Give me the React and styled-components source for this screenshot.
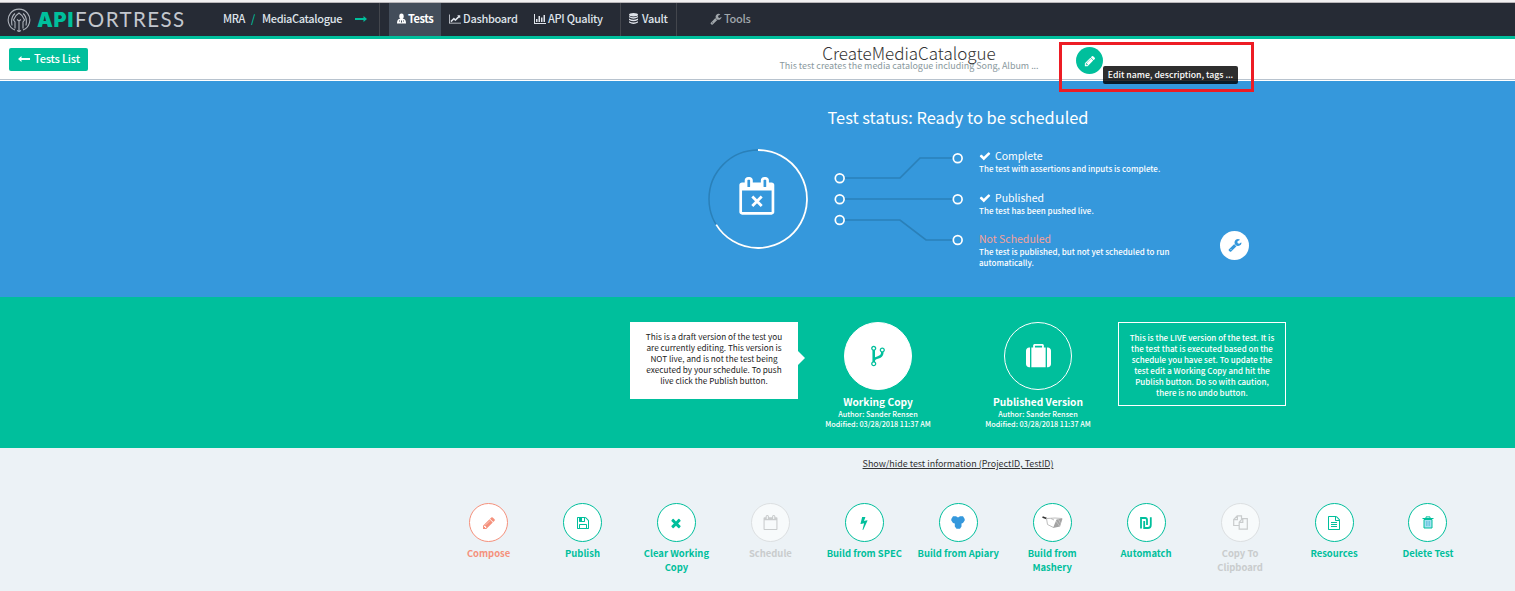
import React from "react";
import styled, { createGlobalStyle } from "styled-components";

const GREEN = "#00bf9c";
const BLUE = "#3598dc";
const SALMON = "#f5917c";

const Global = createGlobalStyle`
  * { box-sizing: border-box; }
  html, body { margin: 0; padding: 0; }
  body {
    background: #ecf2f6;
    font-family: "Noto Sans CJK SC", "Noto Sans", sans-serif;
    overflow: hidden;
  }
`;

const Page = styled.div`
  width: 1515px;
  height: 591px;
  overflow: hidden;
`;

/* ---------- icons ---------- */

const PATHS = {
  pencil: "M491 1536l91-91-235-235-91 91v107h128v128h107zm523-928q0-22-22-22-10 0-17 7l-542 542q-7 7-7 17 0 22 22 22 10 0 17-7l542-542q7-7 7-17zm-54-192l416 416-832 832h-416v-416zm683 96q0 53-37 90l-166 166-416-416 166-165q36-38 90-38 53 0 91 38l235 234q37 39 37 91z",
  check: "M1671 566q0 40-28 68l-724 724-136 136q-28 28-68 28t-68-28l-136-136-362-362q-28-28-28-68t28-68l136-136q28-28 68-28t68 28l294 295 656-657q28-28 68-28t68 28l136 136q28 28 28 68z",
  times: "M1490 1322q0 40-28 68l-136 136q-28 28-68 28t-68-28l-294-294-294 294q-28 28-68 28t-68-28l-136-136q-28-28-28-68t28-68l294-294-294-294q-28-28-28-68t28-68l136-136q28-28 68-28t68 28l294 294 294-294q28-28 68-28t68 28l136 136q28 28 28 68t-28 68l-294 294 294 294q28 28 28 68z",
  wrench: "M448 1472q0-26-19-45t-45-19-45 19-19 45 19 45 45 19 45-19 19-45zm644-420l-682 682q-37 37-90 37-52 0-91-37l-106-108q-38-36-38-90 0-53 38-91l681-681q39 98 114.5 173.5t173.5 114.5zm634-435q0 39-23 106-47 134-164.5 217.5t-258.5 83.5q-185 0-316.5-131.5t-131.5-316.5 131.5-316.5 316.5-131.5q58 0 121.5 16.5t107.5 46.5q16 11 16 28t-16 28l-293 169v224l193 107q5-3 79-48.5t135.5-81 70.5-35.5q15 0 23.5 10t8.5 25z",
  save: "M512 1536h768v-384h-768v384zm896 0h128v-896q0-14-10-38.5t-20-34.5l-281-281q-10-10-34-20t-39-10v416q0 40-28 68t-68 28h-576q-40 0-68-28t-28-68v-416h-128v1280h128v-416q0-40 28-68t68-28h832q40 0 68 28t28 68v416zm-384-928v-320q0-13-9.5-22.5t-22.5-9.5h-192q-13 0-22.5 9.500t-9.500 22.500v320q0 13 9.500 22.500t22.500 9.500h192q13 0 22.500-9.500t9.500-22.500zm640 32v928q0 40-28 68t-68 28h-1344q-40 0-68-28t-28-68v-1344q0-40 28-68t68-28h928q40 0 88 20t76 48l280 280q28 28 48 76t20 88z",
  file: "M1596 380q28 28 48 76t20 88v1152q0 40-28 68t-68 28h-1344q-40 0-68-28t-28-68v-1600q0-40 28-68t68-28h896q40 0 88 20t76 48zm-444-244v376h376q-10-29-22-41l-313-313q-12-12-41-22zm384 1528v-1024h-416q-40 0-68-28t-28-68v-416h-768v1536h1280zm-1024-864q0-14 9-23t23-9h704q14 0 23 9t9 23v64q0 14-9 23t-23 9h-704q-14 0-23-9t-9-23v-64zm736 224q14 0 23 9t9 23v64q0 14-9 23t-23 9h-704q-14 0-23-9t-9-23v-64q0-14 9-23t23-9h704zm0 256q14 0 23 9t9 23v64q0 14-9 23t-23 9h-704q-14 0-23-9t-9-23v-64q0-14 9-23t23-9h704z",
  suitcase: "M640 256h512v-128h-512v128zm-352 0v1408h-64q-92 0-158-66t-66-158v-960q0-92 66-158t158-66h64zm1120 0v1408h-1024v-1408h128v-160q0-40 28-68t68-28h576q40 0 68 28t28 68v160h128zm384 224v960q0 92-66 158t-158 66h-64v-1408h64q92 0 158 66t66 158z",
  fork: "M672 1472q0-40-28-68t-68-28-68 28-28 68 28 68 68 28 68-28 28-68zm0-1152q0-40-28-68t-68-28-68 28-28 68 28 68 68 28 68-28 28-68zm640 128q0-40-28-68t-68-28-68 28-28 68 28 68 68 28 68-28 28-68zm96 0q0 52-26 96.5t-70 69.5q-2 287-226 414-67 38-203 81-128 40-169.5 71t-41.5 100v26q44 25 70 69.5t26 96.5q0 80-56 136t-136 56-136-56-56-136q0-52 26-96.5t70-69.5v-820q-44-25-70-69.5t-26-96.5q0-80 56-136t136-56 136 56 56 136q0 52-26 96.5t-70 69.5v497q54-26 154-57 55-17 87.5-29.5t70.5-31 59-39.5 40.5-51 28-69.5 8.5-91.5q-44-25-70-69.5t-26-96.5q0-80 56-136t136-56 136 56 56 136z",
  calendar: "M192 1664h1408v-1024h-1408v1024zm384-1216v-288q0-14-9-23t-23-9h-64q-14 0-23 9t-9 23v288q0 14 9 23t23 9h64q14 0 23-9t9-23zm768 0v-288q0-14-9-23t-23-9h-64q-14 0-23 9t-9 23v288q0 14 9 23t23 9h64q14 0 23-9t9-23zm384-64v1280q0 52-38 90t-90 38h-1408q-52 0-90-38t-38-90v-1280q0-52 38-90t90-38h128v-96q0-66 47-113t113-47h64q66 0 113 47t47 113v96h384v-96q0-66 47-113t113-47h64q66 0 113 47t47 113v96h128q52 0 90 38t38 90z",
  bolt: "M1333 566q18 20 7 44l-540 1157q-13 25-42 25-4 0-14-2-17-5-25.5-19t-4.5-30l197-808-406 101q-4 1-12 1-18 0-31-11-18-15-13-39l201-825q4-14 16-23t28-9h328q19 0 32 12.5t13 29.5q0 8-5 18l-171 463 396-98q8-2 12-2 19 0 34 15z",
  chart: "M1920 1536v128h-2048v-1536h128v1408h1920zm-128-1248v435q0 21-19.5 29.5t-35.5-7.5l-121-121-633 633q-10 10-23 10t-23-10l-233-233-416 416-192-192 585-585q10-10 23-10t23 10l233 233 464-464-121-121q-16-16-7.5-35.5t29.5-19.5h435q14 0 23 9t9 23z",
};

const Svg = styled.svg`
  display: block;
  flex: none;
`;

const Glyph = ({ name, size, box = "0 0 1792 1792", w }) => (
  <Svg width={w || size} height={size} viewBox={box} fill="currentColor">
    <path d={PATHS[name]} />
  </Svg>
);

const Knight = () => (
  <Svg width="24" height="24" viewBox="0 0 24 24" fill="none" stroke="#aeb3bb" strokeWidth="1.1">
    <path d="M8 22A10.800 10.800 0 1 1 16 22" />
    <path d="M8 20.500V14L6.500 12 9 7.500 12 5l3 2.500 2.500 4.500L16 14v6.500" />
    <path d="M5 17.500Q3.500 9 8 5.500M19 17.500Q20.500 9 16 5.500M10 11.500L12 13l2-1.500M12 13v10M10 22.500l2 1 2-1" />
  </Svg>
);

const Astronaut = () => (
  <Svg width="9" height="11" viewBox="0 0 9 11" fill="currentColor">
    <path d="M4.500 0.500a2.200 2.200 0 0 1 2.200 2.200v1.300a2.200 2.200 0 0 1-4.400 0V2.700A2.200 2.200 0 0 1 4.500 .5z" />
    <path fillRule="evenodd" d="M2 6h5q2 .6 2 4.500H0Q0 6.600 2 6zM2 7.500v1h1v-1zM4 7.500v2h1v-2zM6 7.500v1h1v-1z" />
  </Svg>
);

const Bars = () => (
  <Svg width="12" height="10" viewBox="0 0 12 10" fill="currentColor">
    <path d="M0 0h1v9h11v1H0zM2 5h1.500v3H2zM4.500 2H6v6H4.500zM7 3.500h1.500V8H7zM9.500 1H11v7H9.500z" />
  </Svg>
);

const Database = () => (
  <Svg width="9" height="11" viewBox="0 0 9 11" fill="currentColor">
    <ellipse cx="4.500" cy="1.700" rx="4.500" ry="1.700" />
    <path d="M0 3q4.500 2.400 9 0v1.300q-4.500 2.800-9 0zM0 5.600q4.500 2.400 9 0v1.300q-4.500 2.800-9 0zM0 8.200q4.500 2.400 9 0v1.300q-4.500 2.800-9 0z" />
  </Svg>
);

const LongArrow = ({ left }) => (
  <Svg width="12" height="8" viewBox="0 0 12 8" fill="currentColor" transform={left ? "scale(-1 1)" : undefined}>
    <path d="M0 3.100h8.500V1l3.500 3-3.500 3V4.900H0z" />
  </Svg>
);

const Apiary = () => (
  <Svg width="14" height="13" viewBox="0 0 14 13" fill={BLUE}>
    <path d="M2 .3h3L7 1.500 9 .3h3L13.700 3v1.500L12 7l-1.500.5v3L9 12.800H5.500L3.800 10.500v-3L2 7 .3 4.500V3z" />
  </Svg>
);

const Masher = () => (
  <Svg width="21" height="13" viewBox="0 0 21 13" fill="none">
    <path d="M.5 1l4 1.600" stroke="#333" strokeWidth="1.600" />
    <path d="M4.500 2.500L13 2l7 .500M4.500 2.500L5.500 8.500l6 3M9 2.500L12 4" stroke="#b5b5b5" strokeWidth=".9" />
    <path d="M14.500 3.500L20.500 2.500l-2.500 8-7 1.500z" fill="#a3a3a3" />
    <path d="M14 5l4 5.500M16.500 3.500l2 4" stroke="#dedede" strokeWidth=".5" />
  </Svg>
);

const Shekel = () => (
  <Svg width="12" height="12" viewBox="0 0 12 12" fill="none" stroke="currentColor" strokeWidth="1.800">
    <path d="M1 11.500V1h4.200Q7 1 7 3v5M4.200 4v7h3.600Q10.800 11 10.800 8V.3" />
  </Svg>
);

const Copies = () => (
  <Svg width="15" height="15" viewBox="0 0 15 15" fill="none" stroke="currentColor" strokeWidth="1.200">
    <path d="M6 10.500H.7V4.500L4.200 .8H8.500V4M4.400 .8v3.900H.7M6.200 7.200L9.500 3.600h4.800v10.600H6.200zM9.800 3.800v3.500H6.300" />
  </Svg>
);

const Trash = () => (
  <Svg width="12" height="13" viewBox="0 0 12 13" fill="none" stroke="currentColor">
    <path d="M2 3.500h8v8.500H2z" fill="#a5e0f0" />
    <path d="M.5 2.500h11M4 2.500V.9h4v1.600" />
    <path d="M4.500 5v5M6 5v5M7.500 5v5" stroke="#4db5d8" strokeWidth=".6" />
  </Svg>
);

/* ---------- top bar ---------- */

const TopEdge = styled.div`
  height: 3px;
  background: #f1f0f1;
  border-bottom: 1px solid #b9b6b9;
`;

const NavBar = styled.header`
  display: flex;
  height: 36px;
  background: #262b35;
  border-bottom: 3px solid ${GREEN};
  color: #dfe3ea;
`;

const Brand = styled.div`
  display: flex;
  align-items: center;
  width: 223px;
  padding-left: 7px;
`;

const BrandName = styled.div`
  display: flex;
  align-items: baseline;
  margin-left: 6px;
  line-height: 24px;
`;

const BrandStrong = styled.span`
  font: 900 20px/24px Inter, sans-serif;
  color: ${GREEN};
  width: 38px;
  letter-spacing: 0.700px;
`;

const BrandLight = styled.span`
  font: 400 20.500px/24px Lato, sans-serif;
  color: #c3c7ce;
  letter-spacing: 1.400px;
`;

const Crumbs = styled.div`
  display: flex;
  align-items: center;
  width: 157px;
  padding-bottom: 2px;
  border-right: 1px solid #43464d;
  font-size: 11px;
  font-weight: 500;
  letter-spacing: -0.350px;
  white-space: pre;
  line-height: 31px;
  i { color: ${GREEN}; font-style: normal; margin: 0 7px 0 6px; }
  svg { color: ${GREEN}; margin-left: 13px; }
`;

const NavItem = styled.div`
  display: flex;
  align-items: center;
  width: ${(p) => p.$w}px;
  padding: 0 0 2px ${(p) => p.$pad}px;
  gap: ${(p) => p.$gap || 2}px;
  margin-left: ${(p) => p.$ml || 0}px;
  font-size: 11px;
  font-weight: ${(p) => (p.$active ? 700 : 500)};
  letter-spacing: ${(p) => (p.$active ? -0.45 : -0.3)}px;
  white-space: nowrap;
  line-height: 31px;
  color: ${(p) => p.$color || "inherit"};
  background: ${(p) => (p.$active ? "#434d5a" : "transparent")};
  border-right: ${(p) => (p.$rule ? "1px solid #43464d" : "0")};
`;

/* ---------- title row ---------- */

const TitleRow = styled.div`
  display: flex;
  align-items: flex-start;
  height: 42px;
  background: #fff;
  box-shadow: inset 0 -1px #fff, inset 0 -2px #b8c3ce;
  padding-left: 9px;
`;

const BackButton = styled.button`
  display: flex;
  align-items: center;
  gap: 4px;
  width: 79px;
  height: 23px;
  margin-top: 9px;
  padding: 0 0 2px 9px;
  border: 0;
  border-radius: 2px;
  background: ${GREEN};
  color: #fff;
  font: 500 11px/19px "Noto Sans CJK SC", sans-serif;
  letter-spacing: -0.200px;
  white-space: nowrap;
`;

const TitleBlock = styled.div`
  width: 300px;
  margin-left: 671px;
  text-align: center;
  white-space: nowrap;
`;

const Title = styled.h1`
  margin: 5px 0 0;
  font-size: 17px;
  font-weight: 300;
  line-height: 17px;
  color: #333;
`;

const Subtitle = styled.div`
  font-size: 8.950px;
  line-height: 10px;
  color: #8a999e;
`;

const Callout = styled.div`
  position: relative;
  flex: none;
  width: 195px;
  height: 50px;
  margin-top: 3px;
  border: 3px solid #ed1c24;
  z-index: 2;
`;

const EditButton = styled.div`
  display: flex;
  align-items: center;
  justify-content: center;
  width: 27px;
  height: 27px;
  margin: 2px 0 0 14px;
  border-radius: 50%;
  background: ${GREEN};
  color: #fff;
`;

const Tooltip = styled.div`
  position: absolute;
  left: 41px;
  top: 21px;
  width: 135px;
  height: 18px;
  border-radius: 2px;
  background: rgba(0, 0, 0, 0.82);
  color: #fff;
  font-size: 8.700px;
  font-weight: 500;
  line-height: 17px;
  text-align: center;
  white-space: nowrap;
`;

/* ---------- status ---------- */

const StatusPanel = styled.section`
  height: 216px;
  padding: 23px 0 0 708px;
  background: ${BLUE};
  color: #fff;
`;

const StatusHeading = styled.h2`
  margin: 0;
  width: 500px;
  text-align: center;
  font-size: 16.400px;
  font-weight: 400;
  line-height: 26px;
  white-space: nowrap;
`;

const StatusBody = styled.div`
  display: flex;
  margin-top: 19px;
`;

const StateList = styled.div`
  width: 241px;
  margin-left: 11px;
`;

const State = styled.div`
  height: ${(p) => p.$h}px;
  white-space: nowrap;
`;

const StateName = styled.div`
  display: flex;
  align-items: center;
  gap: 4px;
  height: 14px;
  font-size: 10.500px;
  line-height: 14px;
  color: ${(p) => (p.$warn ? "#f5a199" : "#fff")};
`;

const StateText = styled.div`
  font-size: 8.030px;
  font-weight: 500;
  line-height: 11px;
`;

const WrenchButton = styled.div`
  display: flex;
  align-items: center;
  justify-content: center;
  width: 29px;
  height: 29px;
  margin-top: 82px;
  padding-bottom: 1px;
  border-radius: 50%;
  background: #fff;
  color: ${BLUE};
`;

const Node = ({ x, y }) => <circle cx={x} cy={y} r="4.400" fill={BLUE} stroke="#fff" strokeWidth="1.700" />;

/* ---------- versions ---------- */

const VersionPanel = styled.section`
  display: flex;
  align-items: flex-start;
  height: 151px;
  padding: 25px 0 0 630px;
  background: ${GREEN};
  color: #fff;
`;

const Note = styled.div`
  position: relative;
  width: 168px;
  height: ${(p) => p.$h}px;
  padding-top: ${(p) => (p.$filled ? 8 : 9)}px;
  text-align: center;
  white-space: nowrap;
  font-size: ${(p) => (p.$filled ? 8.2 : 8)}px;
  line-height: 11px;
  font-weight: ${(p) => (p.$filled ? 400 : 500)};
  background: ${(p) => (p.$filled ? "#fff" : "transparent")};
  color: ${(p) => (p.$filled ? "#222" : "#fff")};
  border: 1px solid #fff;
  &::after {
    content: "";
    display: ${(p) => (p.$filled ? "block" : "none")};
    position: absolute;
    left: 167px;
    top: 28px;
    border: 7px solid transparent;
    border-left-color: #fff;
    border-right-width: 0;
  }
`;

const Version = styled.div`
  display: flex;
  flex-direction: column;
  align-items: center;
  width: 160px;
  white-space: nowrap;
`;

const VersionDisc = styled.div`
  display: flex;
  align-items: center;
  justify-content: center;
  width: 68px;
  height: 68px;
  border: 1px solid #fff;
  border-radius: 50%;
  background: ${(p) => (p.$filled ? "#fff" : "transparent")};
  color: ${(p) => (p.$filled ? GREEN : "#fff")};
`;

const VersionName = styled.div`
  margin-top: 5px;
  font-size: 10.200px;
  font-weight: 700;
  line-height: 14px;
`;

const VersionMeta = styled.div`
  font-size: 7.250px;
  font-weight: 500;
  line-height: 10px;
`;

/* ---------- actions ---------- */

const InfoLink = styled.div`
  width: 400px;
  margin: 9px 0 0 758px;
  text-align: center;
  font-size: 8.950px;
  line-height: 14px;
  color: #333;
  text-decoration: underline;
  white-space: nowrap;
`;

const Actions = styled.nav`
  display: flex;
  margin: 32px 0 0 441.600px;
`;

const Action = styled.div`
  display: flex;
  flex-direction: column;
  align-items: center;
  width: 93.950px;
  flex: none;
  color: ${(p) => p.$color};
  font-size: 9.450px;
  font-weight: 700;
  line-height: 14px;
  text-align: center;
  white-space: pre-line;
`;

const ActionDisc = styled.div`
  display: flex;
  align-items: center;
  justify-content: center;
  width: 39px;
  height: 39px;
  margin-bottom: 4px;
  border: 1px solid ${(p) => (p.$off ? "#dcdfe1" : "currentColor")};
  border-radius: 50%;
  background: ${(p) => (p.$off ? "#f7fafb" : "#fff")};
`;

const OFF = "#c9cccd";
const ACTIONS = [
  ["Compose", SALMON, <Glyph name="pencil" size={14} />],
  ["Publish", GREEN, <Glyph name="save" size={14} />],
  ["Clear Working\nCopy", GREEN, <Glyph name="times" size={14} />],
  ["Schedule", OFF, <Glyph name="calendar" size={15} />],
  ["Build from SPEC", GREEN, <Glyph name="bolt" size={14} />],
  ["Build from Apiary", GREEN, <Apiary />],
  ["Build from\nMashery", GREEN, <Masher />],
  ["Automatch", GREEN, <Shekel />],
  ["Copy To\nClipboard", OFF, <Copies />],
  ["Resources", GREEN, <Glyph name="file" size={14} />],
  ["Delete Test", GREEN, <Trash />],
];

export default function App() {
  return (
    <Page>
      <Global />
      <TopEdge />
      <NavBar>
        <Brand>
          <Knight />
          <BrandName>
            <BrandStrong>API</BrandStrong>
            <BrandLight>FORTRESS</BrandLight>
          </BrandName>
        </Brand>
        <Crumbs>
          MRA<i>/</i>MediaCatalogue<LongArrow />
        </Crumbs>
        <NavItem $w={52} $ml={9} $pad={8} $active $color="#fff"><Astronaut />Tests</NavItem>
        <NavItem $w={85} $pad={8}><Glyph name="chart" size={12} w={12} box="-128 0 2048 1792" />Dashboard</NavItem>
        <NavItem $w={95} $pad={8} $rule><Bars />API Quality</NavItem>
        <NavItem $w={56} $pad={8} $gap={4} $rule><Database />Vault</NavItem>
        <NavItem $w={80} $pad={33} $color="#a0a6ab"><Glyph name="wrench" size={12} />Tools</NavItem>
      </NavBar>

      <TitleRow>
        <BackButton><LongArrow left />Tests List</BackButton>
        <TitleBlock>
          <Title>CreateMediaCatalogue</Title>
          <Subtitle>This test creates the media catalogue including Song, Album ...</Subtitle>
        </TitleBlock>
        <Callout>
          <EditButton><Glyph name="pencil" size={12} /></EditButton>
          <Tooltip>Edit name, description, tags ...</Tooltip>
        </Callout>
      </TitleRow>

      <StatusPanel>
        <StatusHeading>Test status: Ready to be scheduled</StatusHeading>
        <StatusBody>
          <Svg width="100" height="100" viewBox="0 0 100 100" fill="none">
            <circle cx="50" cy="50" r="49" stroke="#2a80b9" strokeWidth="1.500" />
            <path d="M50 1A49 49 0 1 1 8.200 75.600" stroke="#fff" strokeWidth="1.800" />
            <g transform="translate(30 28) scale(.021)" fill="#fff"><path d={PATHS.calendar} /></g>
            <path d="M44.300 47.500l9.400 9.400M53.700 47.500l-9.400 9.400" stroke="#fff" strokeWidth="2.800" />
          </Svg>
          <Svg width="160" height="100" viewBox="0 0 160 100" fill="none">
            <path d="M32 29H92L112 9H150M32 50H150M32 71H92L118 91H150" stroke="#2a80b9" strokeWidth="1.700" />
            <Node x={31.700} y={29.300} /><Node x={31.700} y={50.200} /><Node x={31.700} y={71} />
            <Node x={149.700} y={9.300} /><Node x={149.700} y={50.200} /><Node x={149.700} y={91} />
          </Svg>
          <StateList>
            <State $h={42}>
              <StateName><Glyph name="check" size={12} />Complete</StateName>
              <StateText>The test with assertions and inputs is complete.</StateText>
            </State>
            <State $h={41}>
              <StateName><Glyph name="check" size={12} />Published</StateName>
              <StateText>The test has been pushed live.</StateText>
            </State>
            <State $h={40}>
              <StateName $warn>Not Scheduled</StateName>
              <StateText>The test is published, but not yet scheduled to run<br />automatically.</StateText>
            </State>
          </StateList>
          <WrenchButton><Glyph name="wrench" size={14} /></WrenchButton>
        </StatusBody>
      </StatusPanel>

      <VersionPanel>
        <Note $filled $h={77}>
          This is a draft version of the test you<br />are currently editing. This version is<br />NOT live, and is not the test being<br />executed by your schedule. To push<br />live click the Publish button.
        </Note>
        <Version>
          <VersionDisc $filled><Glyph name="fork" size={24} /></VersionDisc>
          <VersionName>Working Copy</VersionName>
          <VersionMeta>Author: Sander Rensen</VersionMeta>
          <VersionMeta>Modified: 03/28/2018 11:37 AM</VersionMeta>
        </Version>
        <Version>
          <VersionDisc><Glyph name="suitcase" size={25} /></VersionDisc>
          <VersionName>Published Version</VersionName>
          <VersionMeta>Author: Sander Rensen</VersionMeta>
          <VersionMeta>Modified: 03/28/2018 11:37 AM</VersionMeta>
        </Version>
        <Note $h={84}>
          This is the LIVE version of the test. It is<br />the test that is executed based on the<br />schedule you have set. To update the<br />test edit a Working Copy and hit the<br />Publish button. Do so with caution,<br />there is no undo button.
        </Note>
      </VersionPanel>

      <InfoLink>Show/hide test information (ProjectID, TestID)</InfoLink>
      <Actions>
        {ACTIONS.map(([label, color, icon]) => (
          <Action key={label} $color={color}>
            <ActionDisc $off={color === OFF}>{icon}</ActionDisc>
            {label}
          </Action>
        ))}
      </Actions>
    </Page>
  );
}
